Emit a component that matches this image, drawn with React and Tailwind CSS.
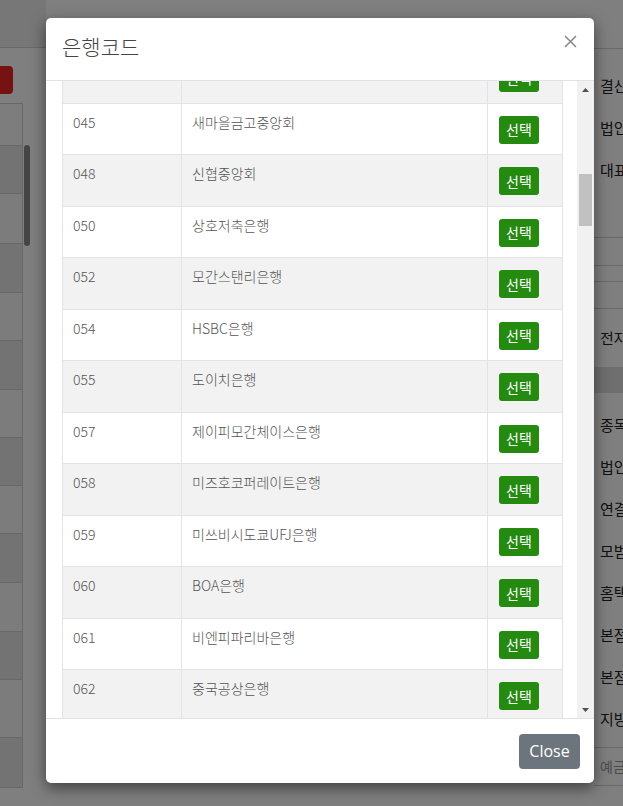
import React from "react";

const rows = [
  ["039", "경남은행"],
  ["045", "새마을금고중앙회"],
  ["048", "신협중앙회"],
  ["050", "상호저축은행"],
  ["052", "모간스탠리은행"],
  ["054", "HSBC은행"],
  ["055", "도이치은행"],
  ["057", "제이피모간체이스은행"],
  ["058", "미즈호코퍼레이트은행"],
  ["059", "미쓰비시도쿄UFJ은행"],
  ["060", "BOA은행"],
  ["061", "비엔피파리바은행"],
  ["062", "중국공상은행"],
  ["063", "중국은행"],
];

const leftRows = [48, 50, 49, 48, 49, 48, 48, 48, 49, 49, 48, 58, 50];

const rightLabels = ["종목구분", "법인구분", "연결구분", "모범납세자", "홈택스", "본점주소", "본점전화", "지방세"];

function Background() {
  return (
    <div className="flex h-[806px] w-[623px] bg-white">
      {/* left page fragment */}
      <div className="flex w-[46px] flex-col">
        <div className="h-[48px] border-b border-[#d2d2d2] bg-[#eeeeee]" />
        <div className="flex h-[55px] flex-col pt-[18px]">
          <div className="h-[28px] w-[13px] rounded-r-[4px] bg-[#ee2424]" />
        </div>
        <div className="flex">
          <div className="flex w-[23px] flex-col border-r border-t border-[#d0d0d0]">
            <div className="h-[42px] border-b border-[#d0d0d0] bg-[#fafafa]" />
            {leftRows.map((h, i) => (
              <div
                key={i}
                style={{ height: h }}
                className={`border-b border-[#d0d0d0] ${i % 2 === 0 ? "bg-[#e6e6e6]" : "bg-[#f8f8f8]"}`}
              />
            ))}
          </div>
          <div className="flex w-[8px] flex-col pl-[1px] pt-[42px]">
            <div className="h-[101px] w-[6px] rounded-[3px] bg-[#8a8a8a]" />
          </div>
        </div>
      </div>
      <div className="flex-1" />
      {/* right page fragment */}
      <div className="flex w-[29px] flex-col overflow-hidden whitespace-nowrap text-[15px] text-[#222]">
        <div className="h-[49px] shrink-0 border-b border-[#d2d2d2]" />
        <div className="h-[16px] shrink-0" />
        {["결산월", "법인구분", "대표자명"].map((t) => (
          <div key={t} className="flex h-[42px] shrink-0 items-center pl-[6px]">{t}</div>
        ))}
        <div className="h-[47px] shrink-0 border-b border-[#d2d2d2]" />
        <div className="h-[28px] shrink-0 border-b border-[#d2d2d2]" />
        <div className="h-[16px] shrink-0 border-b border-[#d2d2d2]" />
        <div className="h-[27px] shrink-0 border-b border-[#d2d2d2]" />
        <div className="flex h-[58px] shrink-0 items-center pl-[6px]">전자세금계산서</div>
        <div className="h-[26px] shrink-0 bg-[#dedede]" />
        <div className="h-[11px] shrink-0" />
        {rightLabels.map((t, i) => (
          <div key={i} className="flex h-[42px] shrink-0 items-center pl-[6px]">{t}</div>
        ))}
        <div className="h-[8px] shrink-0 border-b border-[#d2d2d2]" />
        <div className="flex h-[38px] shrink-0 items-center border-b border-[#d2d2d2] pl-[6px] text-[14px] text-[#999]">
          예금주명
        </div>
      </div>
    </div>
  );
}

function Arrow({ up }) {
  return (
    <div className="flex h-[17px] w-[17px] items-center justify-center">
      <svg width="7" height="4" viewBox="0 0 7 4">
        {up ? <polygon points="0,4 7,4 3.5,0" fill="#505050" /> : <polygon points="0,0 7,0 3.5,4" fill="#505050" />}
      </svg>
    </div>
  );
}

export default function App() {
  return (
    <div
      className="relative h-[806px] w-[623px] overflow-hidden"
      style={{ fontFamily: '"Noto Sans CJK KR", "Noto Sans", sans-serif' }}
    >
      <Background />
      <div className="absolute inset-0 bg-black/50" />
      <div className="absolute left-[46px] top-[18px] flex w-[548px] flex-col rounded-[5px] bg-white shadow-[0_5px_15px_rgba(0,0,0,0.5)]">
        {/* header */}
        <div className="flex h-[63px] items-start justify-between border-b border-[#e2e2e6] pl-[16px] pr-[17px] pt-[13px]">
          <div className="text-[21px] font-light leading-[30px] text-[#444]">은행코드</div>
          <svg width="13" height="13" viewBox="0 0 13 13" className="mt-[4px]">
            <path d="M1 1 L12 12 M12 1 L1 12" stroke="#8a8a8a" strokeWidth="1.6" />
          </svg>
        </div>
        {/* body */}
        <div className="flex h-[637px]">
          <div className="w-[16px] shrink-0" />
          <div className="w-[501px] shrink-0 overflow-hidden">
            <div className="mt-[-29px] flex flex-col">
              {rows.map(([code, name], i) => (
                <div
                  key={code}
                  className={`flex h-[51.5px] shrink-0 border-x border-b border-[#e2e2e8] text-[14px] font-light text-[#555] ${
                    i % 2 === 0 ? "bg-[#f2f2f2]" : "bg-white"
                  }`}
                >
                  <div className="w-[119px] border-r border-[#e2e2e8] pl-[10px] pt-[8px] leading-[21px]">{code}</div>
                  <div className="w-[306px] border-r border-[#e2e2e8] pl-[10px] pt-[8px] leading-[21px]">{name}</div>
                  <div className="flex-1 pl-[11px] pt-[12px]">
                    <div className="flex h-[28px] w-[40px] items-center justify-center rounded-[3px] bg-[#248a10] text-[14px] font-normal text-white">
                      선택
                    </div>
                  </div>
                </div>
              ))}
            </div>
          </div>
          <div className="w-[14px] shrink-0" />
          <div className="flex w-[17px] shrink-0 flex-col bg-[#f1f1f1]">
            <Arrow up />
            <div className="h-[76px]" />
            <div className="mx-[2px] h-[52px] bg-[#c1c1c1]" />
            <div className="flex-1" />
            <Arrow />
          </div>
        </div>
        {/* footer */}
        <div className="flex h-[65px] items-start justify-end border-t border-[#e2e2e6] pr-[14px] pt-[15px]">
          <div
            className="flex h-[35px] w-[61px] items-center justify-center rounded-[4px] bg-[#6c757d] pb-[1px] text-[16px] text-white"
            style={{ fontFamily: '"Open Sans", "Noto Sans", sans-serif' }}
          >
            Close
          </div>
        </div>
      </div>
    </div>
  );
}
